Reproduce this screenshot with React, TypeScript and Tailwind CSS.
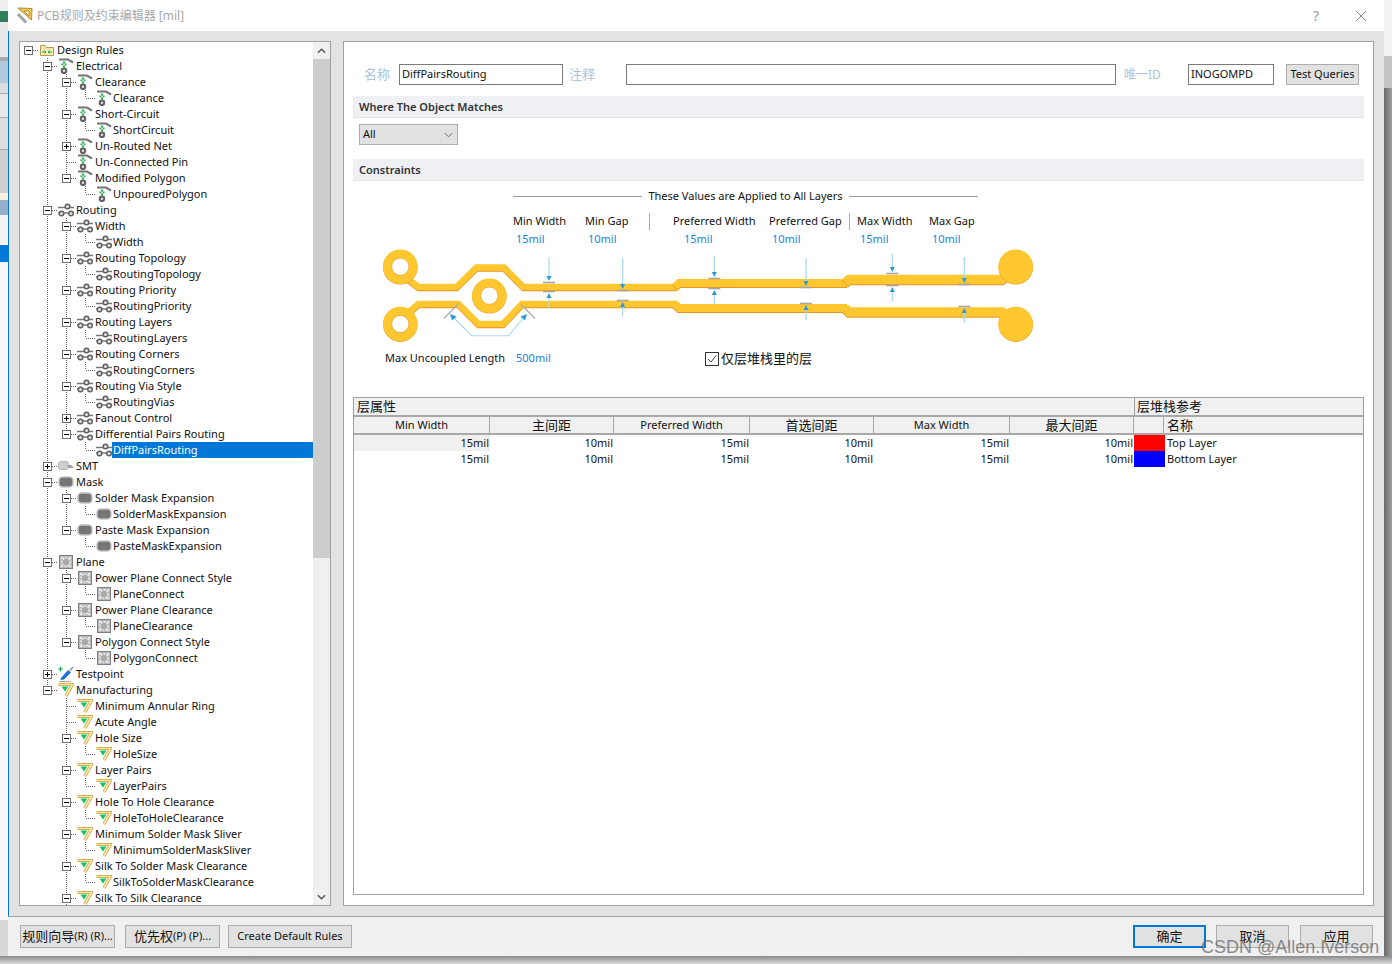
import React from 'react';

type IconKind = 'folder' | 'rule' | 'route' | 'smt' | 'mask' | 'plane' | 'test' | 'mfg';

type Node = {
  label: string;
  icon: IconKind;
  open?: boolean;
  selected?: boolean;
  children?: Node[];
};

const leaf = (label: string, icon: IconKind, selected = false): Node => ({ label, icon, selected });
const group = (label: string, icon: IconKind, child: string, selected = false): Node => ({
  label,
  icon,
  open: true,
  children: [leaf(child, icon, selected)],
});

const TREE: Node = {
  label: 'Design Rules',
  icon: 'folder',
  open: true,
  children: [
    {
      label: 'Electrical',
      icon: 'rule',
      open: true,
      children: [
        group('Clearance', 'rule', 'Clearance'),
        group('Short-Circuit', 'rule', 'ShortCircuit'),
        { label: 'Un-Routed Net', icon: 'rule', open: false },
        leaf('Un-Connected Pin', 'rule'),
        group('Modified Polygon', 'rule', 'UnpouredPolygon'),
      ],
    },
    {
      label: 'Routing',
      icon: 'route',
      open: true,
      children: [
        group('Width', 'route', 'Width'),
        group('Routing Topology', 'route', 'RoutingTopology'),
        group('Routing Priority', 'route', 'RoutingPriority'),
        group('Routing Layers', 'route', 'RoutingLayers'),
        group('Routing Corners', 'route', 'RoutingCorners'),
        group('Routing Via Style', 'route', 'RoutingVias'),
        { label: 'Fanout Control', icon: 'route', open: false },
        group('Differential Pairs Routing', 'route', 'DiffPairsRouting', true),
      ],
    },
    { label: 'SMT', icon: 'smt', open: false },
    {
      label: 'Mask',
      icon: 'mask',
      open: true,
      children: [
        group('Solder Mask Expansion', 'mask', 'SolderMaskExpansion'),
        group('Paste Mask Expansion', 'mask', 'PasteMaskExpansion'),
      ],
    },
    {
      label: 'Plane',
      icon: 'plane',
      open: true,
      children: [
        group('Power Plane Connect Style', 'plane', 'PlaneConnect'),
        group('Power Plane Clearance', 'plane', 'PlaneClearance'),
        group('Polygon Connect Style', 'plane', 'PolygonConnect'),
      ],
    },
    { label: 'Testpoint', icon: 'test', open: false },
    {
      label: 'Manufacturing',
      icon: 'mfg',
      open: true,
      children: [
        leaf('Minimum Annular Ring', 'mfg'),
        leaf('Acute Angle', 'mfg'),
        group('Hole Size', 'mfg', 'HoleSize'),
        group('Layer Pairs', 'mfg', 'LayerPairs'),
        group('Hole To Hole Clearance', 'mfg', 'HoleToHoleClearance'),
        group('Minimum Solder Mask Sliver', 'mfg', 'MinimumSolderMaskSliver'),
        group('Silk To Solder Mask Clearance', 'mfg', 'SilkToSolderMaskClearance'),
        { label: 'Silk To Silk Clearance', icon: 'mfg', open: true },
        leaf('', 'mfg'),
      ],
    },
  ],
};

const Icon = ({ kind }: { kind: IconKind }) => {
  const cls = 'w-[16px] h-[16px] shrink-0 -mx-px';
  if (kind === 'folder') {
    return (
      <svg viewBox="0 0 16 16" className={cls}>
        <path d="M1.5 13.5V3.5H6L7.5 5.5H14.5V13.5Z" fill="#f3e3a6" stroke="#b59a4c" />
        <path d="M2 7.5H14V13H2Z" fill="#fbeeb9" />
        <path d="M3 10H7M5.5 8.5L7 10L5.5 11.5M13 10H9M10.5 8.5L9 10L10.5 11.5" fill="none" stroke="#16a34a" />
      </svg>
    );
  }
  if (kind === 'rule') {
    return (
      <svg viewBox="0 0 16 16" className={cls}>
        <path d="M1 1.5H10L15 4.5" fill="none" stroke="#777" strokeWidth="2.2" />
        <path d="M5 3.5h2v2H5zM3.5 5.5h1.8v1.8H3.5zM6.7 5.5h1.8v1.8H6.7zM5 7.5h2v2H5z" fill="#22b14c" />
        <circle cx="6" cy="12.8" r="2.3" fill="#ddd" stroke="#5f5f5f" strokeWidth="2" />
      </svg>
    );
  }
  if (kind === 'route') {
    return (
      <svg viewBox="0 0 16 16" className={cls}>
        <path d="M0 5.5H16M0 11H16" stroke="#777" strokeWidth="1.6" />
        <circle cx="9.5" cy="4.5" r="2.3" fill="#ddd" stroke="#5f5f5f" strokeWidth="1.4" />
        <circle cx="3.5" cy="11.5" r="2.3" fill="#ddd" stroke="#5f5f5f" strokeWidth="1.4" />
        <circle cx="13" cy="11.5" r="2.3" fill="#ddd" stroke="#5f5f5f" strokeWidth="1.4" />
      </svg>
    );
  }
  if (kind === 'smt') {
    return (
      <svg viewBox="0 0 16 16" className={cls}>
        <rect x="0.5" y="3.5" width="10" height="8" rx="2.5" fill="#cfcfcf" stroke="#b5b5b5" />
        <path d="M9 7H13L16 10H11Z" fill="#9a9a9a" />
      </svg>
    );
  }
  if (kind === 'mask') {
    return (
      <svg viewBox="0 0 16 16" className={cls}>
        <rect x="1" y="3" width="14" height="10" rx="3.5" fill="#757575" stroke="#c4c4c4" strokeWidth="1.5" />
      </svg>
    );
  }
  if (kind === 'plane') {
    return (
      <svg viewBox="0 0 16 16" className={cls}>
        <rect x="1.5" y="1.5" width="13" height="13" fill="#b8b8b8" stroke="#808080" />
        <circle cx="8" cy="8" r="4" fill="#a8a8a8" stroke="#f4f4f4" strokeWidth="1.5" strokeDasharray="1.8 1.2" />
        <path d="M3 3h1.8v1.8H3zM11.2 3H13v1.8h-1.8zM3 11.2h1.8V13H3zM11.2 11.2H13V13h-1.8z" fill="#f2f2f2" />
      </svg>
    );
  }
  if (kind === 'test') {
    return (
      <svg viewBox="0 0 16 16" className={cls}>
        <path d="M0 3H5M2.5 0.5V5.5" stroke="#15a34a" strokeWidth="1.2" />
        <path d="M3 12L10 4L13 6.5L6 13.5L2.5 14Z" fill="#1d6fd8" />
        <path d="M12 4.5L15 1" stroke="#8f8f8f" strokeWidth="1.4" />
        <path d="M1 15.5H13" stroke="#a8a8a8" />
      </svg>
    );
  }
  return (
    <svg viewBox="0 0 16 16" className={cls}>
      <path d="M0.5 2.5H14.5L8 14" fill="none" stroke="#c79f45" strokeWidth="3.2" />
      <path d="M0.5 2.5H14.5L8 14" fill="none" stroke="#ffeb9c" strokeWidth="1.6" />
      <path d="M3.5 4.5H10.5L7 9.5Z" fill="#16c45f" />
    </svg>
  );
};

// one 19px column of the tree's dotted guide lines
const Guide = ({ up, down, right, box }: { up?: boolean; down?: boolean; right?: boolean; box?: 'plus' | 'minus' }) => (
  <svg width="19" height="16" viewBox="0 0 19 16" className="shrink-0" shapeRendering="crispEdges">
    {up && <path d="M7.5 0V8" stroke="#666" strokeDasharray="1 1" />}
    {down && <path d="M7.5 8V16" stroke="#666" strokeDasharray="1 1" />}
    {right && <path d="M8 8.5H18" stroke="#666" strokeDasharray="1 1" />}
    {box && (
      <g>
        <rect x="3.5" y="4.5" width="8" height="8" fill="#fff" stroke="#6e6e6e" />
        <path d="M5 8.5H10" stroke="#000" />
        {box === 'plus' && <path d="M7.5 6V11" stroke="#000" />}
      </g>
    )}
  </svg>
);

const renderRows = (node: Node, trail: boolean[], isLast: boolean, isRoot: boolean, out: React.ReactNode[]) => {
  const depth = trail.length;
  const hasBox = node.open !== undefined;
  out.push(
    <div key={out.length} className="flex h-4 items-center">
      {trail.map((more, i) => (
        <Guide key={i} up={more} down={more} />
      ))}
      <Guide
        up={!isRoot}
        down={!isRoot && !isLast}
        right
        box={hasBox ? (node.open ? 'minus' : 'plus') : undefined}
      />
      <Icon kind={node.icon} />
      <span
        className={`h-4 leading-4 px-px whitespace-nowrap ${depth === 3 ? 'ml-px' : 'ml-[2px]'} ${
          node.selected ? 'flex-1 bg-[#0078d7] text-white' : ''
        }`}
      >
        {node.label}
      </span>
    </div>
  );
  if (node.open && node.children) {
    node.children.forEach((child, i) => {
      renderRows(child, [...trail, !isLast], i === node.children!.length - 1, false, out);
    });
  }
};

const RuleTree = () => {
  const rows: React.ReactNode[] = [];
  renderRows(TREE, [], true, true, rows);
  return <div className="flex-1 min-w-0 overflow-hidden pl-px">{rows}</div>;
};

const Tick = ({ x, y }: { x: number; y: number }) => (
  <path d={`M${x - 6} ${y}H${x + 6}`} stroke="#a9a39a" strokeWidth="1.6" />
);

// arrow pointing down onto the trace from above, then up onto it from below
const Dim = ({ x, t1, y1, y2, b2 }: { x: number; t1: number; y1: number; y2: number; b2: number }) => (
  <g>
    <path d={`M${x} ${t1}V${y1 - 4}M${x} ${y2 + 4}V${b2}`} stroke="#a9d6ee" strokeWidth="1.2" />
    <path d={`M${x - 2.5} ${y1 - 5}H${x + 2.5}L${x} ${y1}Z`} fill="#2a9bd6" />
    <path d={`M${x - 2.5} ${y2 + 5}H${x + 2.5}L${x} ${y2}Z`} fill="#2a9bd6" />
    <Tick x={x} y={y1 + 1.5} />
    <Tick x={x} y={y2 - 1.5} />
  </g>
);

const Trace = ({ d, w }: { d: string; w: number }) => (
  <g fill="none" strokeLinejoin="miter">
    <path d={d} stroke="#e2952a" strokeWidth={w} transform="translate(0 1)" />
    <path d={d} stroke="#ffc72f" strokeWidth={w} />
  </g>
);

const Pad = ({ x, y, hole }: { x: number; y: number; hole?: boolean }) => (
  <g>
    <circle cx={x} cy={y + 0.6} r="17.3" fill="#e2952a" />
    <circle cx={x} cy={y} r="17.3" fill="#ffc72f" />
    {hole && <circle cx={x} cy={y} r="8.6" fill="#fff" stroke="#e2952a" strokeWidth="0.6" />}
  </g>
);

const PairDiagram = () => (
  <svg viewBox="380 247 660 100" className="w-[660px] h-[100px] ml-[27px] shrink-0">
    <Trace d="M404 276L418.5 287H456.5L476.5 267.5H504L523.5 287H677" w={6.5} />
    <Trace d="M675 287L679 283H847" w={8} />
    <Trace d="M845 283L849 279.5H1002L1012 270" w={9.5} />
    <Trace d="M404 316L418.5 304H458.5L478.5 324H503L522 304H677" w={6.5} />
    <Trace d="M675 304L679 308H847" w={8} />
    <Trace d="M845 308L849 312H1002L1012 322" w={9.5} />
    <Pad x={400.3} y={266.7} hole />
    <Pad x={400.3} y={324} hole />
    <Pad x={489.3} y={295.7} hole />
    <Pad x={1015.7} y={266.7} />
    <Pad x={1015.7} y={324} />

    <Dim x={549} t1={257} y1={281} y2={293} b2={308} />
    <Dim x={622.7} t1={258} y1={289} y2={302} b2={316} />
    <Dim x={714.3} t1={256} y1={277} y2={290} b2={304} />
    <Dim x={806} t1={258} y1={286} y2={305} b2={320} />
    <Dim x={892.3} t1={254} y1={272} y2={287} b2={301} />
    <Dim x={964.3} t1={257} y1={283} y2={308} b2={323} />

    <path d="M444 318.5L458.5 303.5M521 304.5L535 318.5" stroke="#a9a9a9" strokeWidth="1.1" fill="none" />
    <path d="M451 315L471.7 335.7H508.3L526 315" stroke="#a9d6ee" strokeWidth="1.1" fill="none" />
    <path d="M450 314L456.5 316.5L452 320.5Z" fill="#2a9bd6" />
    <path d="M527 314L520.5 316.5L525 320.5Z" fill="#2a9bd6" />
  </svg>
);

const Button = ({ children, className = '' }: { children: React.ReactNode; className?: string }) => (
  <button className={`h-[23px] bg-[#e1e1e1] border border-[#adadad] flex items-center justify-center whitespace-nowrap ${className}`}>
    {children}
  </button>
);

const Header = ({ children }: { children: React.ReactNode }) => (
  <div className="h-[22px] bg-[#eef0f4] border-b border-[#e3e3e3] pl-[6px] pt-px flex items-center font-semibold text-[#333]">
    {children}
  </div>
);

const COLS = [
  { name: 'Min Width', w: 'w-[136px]', val: '15mil', cjk: false },
  { name: '主间距', w: 'w-[124px]', val: '10mil', cjk: true },
  { name: 'Preferred Width', w: 'w-[136px]', val: '15mil', cjk: false },
  { name: '首选间距', w: 'w-[124px]', val: '10mil', cjk: true },
  { name: 'Max Width', w: 'w-[136px]', val: '15mil', cjk: false },
  { name: '最大间距', w: 'w-[124px]', val: '10mil', cjk: true },
];

const LayerRow = ({ name, color, shaded }: { name: string; color: string; shaded?: boolean }) => (
  <div className="flex h-4 items-center">
    {COLS.map((c, i) => (
      <div key={i} className={`${c.w} h-4 leading-4 text-right pr-px ${shaded && i === 0 ? 'bg-[#f0f0f0]' : ''}`}>
        {c.val}
      </div>
    ))}
    <div className="w-[31px] h-4" style={{ backgroundColor: color }} />
    <div className="pl-[2px] leading-4">{name}</div>
  </div>
);

const App: React.FC = () => {
  return (
    <div className="relative w-[1392px] h-[964px] overflow-hidden bg-[#dcdcdc] text-[11px] text-[#111] font-['Noto_Sans','Noto_Sans_CJK_SC',sans-serif]">
      <div className="flex h-[956px]">
        {/* the application behind the dialog */}
        <div className="w-2 flex flex-col shrink-0 bg-white">
          <div className="h-[11px] bg-[#eeeeee]" />
          <div className="h-[11px] bg-[#2f7d5c]" />
          <div className="h-[35px] bg-[#e8e8e8]" />
          <div className="h-[4px] bg-[#a9a9a9]" />
          <div className="h-[22px] bg-[#aecadc]" />
          <div className="h-[10px] bg-[#dcdcdc]" />
          <div className="h-[24px] bg-[#e8e8e8] border-t border-[#aaa]" />
          <div className="h-[33px] bg-[#dddddd] border-y border-[#aaa]" />
          <div className="h-[43px] bg-[#cfcfcf]" />
          <div className="h-[7px] bg-[#f5f0e0]" />
          <div className="h-[15px] bg-[#95aecb]" />
          <div className="h-[30px] bg-[#f4f4f4]" />
          <div className="h-[17px] bg-[#0078d7]" />
          <div className="flex-1 bg-[#f7f7f7]" />
          <div className="h-[36px] bg-[#d8d8d8]" />
        </div>

        <div className="w-[1376px] shrink-0 flex flex-col">
          <div className="h-[31px] bg-white flex items-center shrink-0">
            <svg viewBox="0 0 16 17" className="w-4 h-[17px] ml-[9px]">
              <path d="M1 1L15 1.5L14.5 13Z" fill="#f3c64b" stroke="#b08a3a" />
              <path d="M7 4H12V9Z" fill="#fff" stroke="#b08a3a" />
              <path d="M1 7L9 15.5" stroke="#a5a5a5" strokeWidth="3" />
            </svg>
            <span className="ml-[4px] text-[12px] text-[#a8a8a8] whitespace-nowrap">PCB规则及约束编辑器 [mil]</span>
            <span className="ml-auto text-[14px] text-[#999]">?</span>
            <svg viewBox="0 0 12 12" className="w-3 h-3 ml-[36px] mr-[17px]">
              <path d="M1 1L11 11M11 1L1 11" stroke="#888" />
            </svg>
          </div>

          <div className="h-[886px] shrink-0 bg-[#e3e3e3] border-l border-[#0078d7] border-b-[#a0a0a0] border-b flex pt-[10px] pb-[10px] pl-[10px] pr-[10px] gap-[12px]">
            {/* rule tree */}
            <div className="w-[312px] shrink-0 bg-white border border-[#a0a0a0] flex overflow-hidden">
              <RuleTree />
              <div className="w-[17px] shrink-0 bg-[#f0f0f0] flex flex-col">
                <div className="h-[17px] flex items-center justify-center shrink-0">
                  <svg viewBox="0 0 10 6" className="w-[9px] h-[6px]">
                    <path d="M1 5L5 1L9 5" fill="none" stroke="#555" strokeWidth="1.6" />
                  </svg>
                </div>
                <div className="h-[499px] bg-[#cdcdcd] shrink-0" />
                <div className="flex-1" />
                <div className="h-[17px] flex items-center justify-center shrink-0">
                  <svg viewBox="0 0 10 6" className="w-[9px] h-[6px]">
                    <path d="M1 1L5 5L9 1" fill="none" stroke="#555" strokeWidth="1.6" />
                  </svg>
                </div>
              </div>
            </div>

            {/* rule details */}
            <div className="flex-1 min-w-0 bg-white border border-[#a0a0a0] px-[9px] pt-[22px] flex flex-col">
              <div className="flex items-center h-[21px] shrink-0">
                <span className="w-[46px] pl-[11px] text-[13px] text-[#a9c4dd]">名称</span>
                <div className="w-[164px] h-[21px] border border-[#7a7a7a] pl-[2px] leading-[18px]">DiffPairsRouting</div>
                <span className="w-[63px] pl-[6px] text-[13px] text-[#a9c4dd]">注释</span>
                <div className="w-[490px] h-[21px] border border-[#7a7a7a]" />
                <span className="w-[72px] pl-[8px] text-[12px] text-[#a9c4dd] whitespace-nowrap">唯一ID</span>
                <div className="w-[86px] h-[21px] border border-[#7a7a7a] pl-[2px] leading-[18px]">INOGOMPD</div>
                <Button className="w-[73px] ml-[12px] !h-[21px]">Test Queries</Button>
              </div>

              <div className="mt-[11px]">
                <Header>Where The Object Matches</Header>
              </div>
              <div className="mt-[6px] ml-[6px] w-[99px] h-[21px] bg-[#e1e1e1] border border-[#adadad] flex items-center justify-between pl-[3px] pr-[4px] shrink-0">
                <span>All</span>
                <svg viewBox="0 0 10 6" className="w-[9px] h-[6px]">
                  <path d="M1 1L5 5L9 1" fill="none" stroke="#555" />
                </svg>
              </div>
              <div className="mt-[14px]">
                <Header>Constraints</Header>
              </div>

              <div className="mt-[8px] ml-[160px] flex items-center h-[14px] shrink-0">
                <div className="w-[129px] h-px bg-[#999]" />
                <span className="w-[207px] text-center whitespace-nowrap">These Values are Applied to All Layers</span>
                <div className="w-[129px] h-px bg-[#999]" />
              </div>

              <div className="mt-[10px] ml-[160px] flex items-center h-4 leading-[14px] shrink-0 whitespace-nowrap">
                <span className="w-[72px]">Min Width</span>
                <span className="w-[64px]">Min Gap</span>
                <div className="w-px h-[17px] bg-[#aaa]" />
                <span className="w-[96px] ml-[23px]">Preferred Width</span>
                <span className="w-[80px]">Preferred Gap</span>
                <div className="w-px h-[17px] bg-[#aaa]" />
                <span className="w-[72px] ml-[7px]">Max Width</span>
                <span>Max Gap</span>
              </div>
              <div className="mt-[2px] ml-[163px] flex items-center h-4 leading-[18px] shrink-0 text-[#1a7fdc]">
                <span className="w-[72px]">15mil</span>
                <span className="w-[96px]">10mil</span>
                <span className="w-[88px]">15mil</span>
                <span className="w-[88px]">10mil</span>
                <span className="w-[72px]">15mil</span>
                <span>10mil</span>
              </div>

              <PairDiagram />

              <div className="mt-[4px] flex items-center h-[15px] shrink-0 whitespace-nowrap">
                <span className="ml-[32px] w-[131px]">Max Uncoupled Length</span>
                <span className="w-[189px] text-[#1a7fdc]">500mil</span>
                <svg viewBox="0 0 14 14" className="w-[14px] h-[14px]">
                  <rect x="0.5" y="0.5" width="13" height="13" fill="#fff" stroke="#333" />
                  <path d="M3 7L6 10L11 3.5" fill="none" stroke="#444" />
                </svg>
                <span className="ml-[2px] text-[13px]">仅层堆栈里的层</span>
              </div>

              {/* layer table */}
              <div className="mt-[31px] h-[498px] shrink-0 border border-[#a0a0a0] flex flex-col">
                <div className="flex h-[19px] bg-[#f0f0f0] border-b-2 border-[#a8a8a8] shrink-0 text-[13px] leading-[17px]">
                  <div className="w-[780px] pl-[3px]">层属性</div>
                  <div className="flex-1 border-l border-[#a0a0a0] pl-[2px]">层堆栈参考</div>
                </div>
                <div className="flex h-[18px] bg-[#f0f0f0] border-b-2 border-[#a8a8a8] shrink-0">
                  {COLS.map((c, i) => (
                    <div
                      key={i}
                      className={`${c.w} text-center leading-4 border-r border-[#a8a8a8] ${c.cjk ? 'text-[13px]' : ''} ${i === 5 ? 'border-[#a0a0a0]' : ''}`}
                    >
                      {c.name}
                    </div>
                  ))}
                  <div className="w-[30px] border-r border-[#a8a8a8]" />
                  <div className="pl-[3px] text-[13px] leading-[16px]">名称</div>
                </div>
                <LayerRow name="Top Layer" color="#ff0000" shaded />
                <LayerRow name="Bottom Layer" color="#0000ff" />
              </div>
            </div>
          </div>

          <div className="flex-1 bg-[#f0f0f0] flex items-start pt-[8px] pl-[12px] pr-[11px]">
            <Button className="w-[95px]"><span className="text-[13px]">规则向导</span>(R) (R)...</Button>
            <Button className="w-[95px] ml-[10px]"><span className="text-[13px]">优先权</span>(P) (P)...</Button>
            <Button className="w-[124px] ml-[8px]">Create Default Rules</Button>
            <Button className="w-[73px] ml-auto text-[13px] !border-2 !border-[#0078d7]">确定</Button>
            <Button className="w-[73px] ml-[10px] text-[13px]">取消</Button>
            <Button className="w-[73px] ml-[11px] text-[13px]">应用</Button>
          </div>
        </div>

        <div className="w-2 shrink-0 flex flex-col bg-gradient-to-r from-[#6a6a6a] to-[#a0a0a0]">
          <div className="h-[56px] bg-[#f2f2f2]" />
          <div className="h-[32px] bg-[#c4c4c4]" />
        </div>
      </div>
      <div className="h-2 bg-gradient-to-b from-[#8a8a8a] to-[#dddddd]" />

      <span className="absolute left-[1201px] top-[936px] text-[18px] leading-[22px] text-[#6f6f6f]/80 font-['Liberation_Sans',sans-serif] whitespace-nowrap">
        CSDN @Allen.Iverson
      </span>
    </div>
  );
};

export default App;
